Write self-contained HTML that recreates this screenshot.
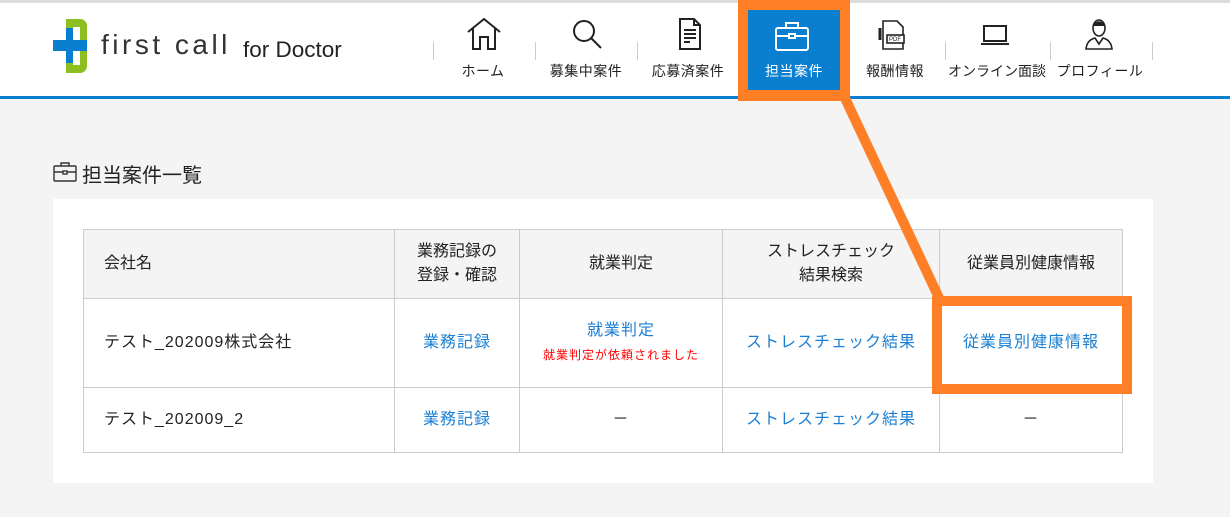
<!DOCTYPE html>
<html><head><meta charset="utf-8"><style>
*{margin:0;padding:0;box-sizing:border-box}
body{width:1230px;height:517px;overflow:hidden;background:#f4f4f4;font-family:"Liberation Sans","Noto Sans CJK JP",sans-serif;color:#222;position:relative}
.abs{position:absolute}
#top{left:0;top:0;width:1230px;height:3px;background:#ddd}
#hdr{left:0;top:3px;width:1230px;height:93px;background:#fff}
#line{left:0;top:96px;width:1230px;height:3px;background:#0a7fd0}
.sep{position:absolute;top:42px;width:1px;height:18px;background:#ccc}
.nav{position:absolute;top:61px;font-size:14px;letter-spacing:0.5px;text-align:center;width:104px;color:#222;white-space:nowrap}
.ic{position:absolute}
table{border-collapse:collapse;position:absolute;left:83px;top:229px;width:1040px;font-size:16px}
td,th{border:1px solid #ccc;text-align:center;font-weight:normal;line-height:24px}
td{letter-spacing:1px}
th{background:#f4f4f4;height:69px}
a{color:#1a7fd4;text-decoration:none}
</style></head><body>
<div class="abs" id="top"></div>
<div class="abs" id="hdr"></div>
<div class="abs" id="line"></div>
<!-- logo -->
<svg class="abs" style="left:52px;top:18px" width="36" height="56" viewBox="0 0 36 56">
<path d="M14 1 H28 a7 7 0 0 1 7 7 V48 a7 7 0 0 1 -7 7 H14 Z" fill="#8cbf1f"/>
<rect x="21" y="9" width="7" height="38" fill="#fff"/>
<rect x="14" y="10" width="7" height="35" fill="#0a7fd0"/>
<rect x="1" y="22" width="34" height="11" fill="#0a7fd0"/>
</svg>
<div class="abs" style="left:101px;top:29px;font-size:28px;letter-spacing:3.5px;color:#333">first call</div>
<div class="abs" style="left:243px;top:37px;font-size:22.5px;color:#222">for Doctor</div>
<!-- nav -->
<div class="sep" style="left:433px"></div><div class="sep" style="left:535px"></div><div class="sep" style="left:637px"></div><div class="sep" style="left:945px"></div><div class="sep" style="left:1050px"></div><div class="sep" style="left:1152px"></div>
<svg class="ic" style="left:466px;top:17px" width="36" height="34" viewBox="0 0 36 34" fill="none" stroke="#222" stroke-width="2"><path d="M2 15 L18 2 L34 15 M7 11 V32 H14 V20 H22 V32 H29 V11"/></svg>
<svg class="ic" style="left:571px;top:18px" width="32" height="32" viewBox="0 0 32 32" fill="none" stroke="#222" stroke-width="2"><circle cx="13" cy="13" r="10"/><path d="M20 20 L30 30"/></svg>
<svg class="ic" style="left:678px;top:18px" width="24" height="32" viewBox="0 0 24 32" fill="none" stroke="#222" stroke-width="2"><path d="M2 1 H16 L22 7 V31 H2 Z M16 1 V7 H22"/><path d="M6 12H18M6 16H18M6 20H18M6 24H12"/></svg>
<div class="nav" style="left:431px">ホーム</div>
<div class="nav" style="left:534px">募集中案件</div>
<div class="nav" style="left:636px">応募済案件</div>
<!-- active -->
<div class="abs" style="left:738px;top:0;width:112px;height:101px;background:#ff7f27"></div>
<div class="abs" style="left:748px;top:10px;width:92px;height:80px;background:#0a7fd0"></div>
<svg class="ic" style="left:774px;top:21px" width="36" height="30" viewBox="0 0 36 30" fill="none" stroke="#fff" stroke-width="2"><rect x="2" y="7" width="32" height="22" rx="2"/><path d="M12 7V2H24V7M2 15H34"/><rect x="15" y="13" width="6" height="4" fill="#0a7fd0"/></svg>
<div class="nav" style="left:742px;color:#fff">担当案件</div>
<svg class="ic" style="left:878px;top:20px" width="28" height="30" viewBox="0 0 28 30" fill="none" stroke="#222" stroke-width="1.6"><path d="M5 1H19L25 7V29H5Z"/><rect x="9" y="15" width="17" height="8" fill="#fff"/><text x="11" y="21" font-size="6" fill="#222" stroke="none">PDF</text><path d="M2 8V20" stroke-width="3"/></svg>
<div class="nav" style="left:843px">報酬情報</div>
<svg class="ic" style="left:980px;top:24px" width="30" height="22" viewBox="0 0 30 22" fill="none" stroke="#222" stroke-width="2"><rect x="4" y="2" width="22" height="15"/><path d="M1 20H29"/></svg>
<div class="nav" style="left:945px;width:104px;letter-spacing:0">オンライン面談</div>
<svg class="ic" style="left:1084px;top:18px" width="30" height="32" viewBox="0 0 30 32" fill="none" stroke="#222" stroke-width="1.6"><ellipse cx="15" cy="10" rx="6" ry="8"/><path d="M9 8 Q15 0 21 8" fill="#222"/><path d="M2 31 Q3 22 11 20 L15 26 L19 20 Q27 22 28 31Z"/></svg>
<div class="nav" style="left:1048px">プロフィール</div>
<!-- title -->
<svg class="abs" style="left:53px;top:162px" width="24" height="20" viewBox="0 0 24 20" fill="none" stroke="#333" stroke-width="1.4"><rect x="1" y="4" width="22" height="15" rx="1"/><path d="M8 4V1H16V4M1 10H23"/><rect x="10" y="9" width="4" height="3" fill="#fff"/></svg>
<div class="abs" style="left:82px;top:159px;font-size:20px;color:#222">担当案件一覧</div>
<div class="abs" style="left:53px;top:199px;width:1100px;height:284px;background:#fff"></div>
<table>
<tr><th style="width:311px;text-align:left;padding-left:20px">会社名</th><th style="width:125px">業務記録の<br>登録・確認</th><th style="width:203px">就業判定</th><th style="width:217px">ストレスチェック<br>結果検索</th><th>従業員別健康情報</th></tr>
<tr style="height:89px"><td style="text-align:left;padding-left:20px">テスト_202009株式会社</td><td><a>業務記録</a></td><td><a>就業判定</a><br><span style="color:#f00;font-size:12px;letter-spacing:1px">就業判定が依頼されました</span></td><td><a>ストレスチェック結果</a></td><td><a>従業員別健康情報</a></td></tr>
<tr style="height:65px"><td style="text-align:left;padding-left:20px">テスト_202009_2</td><td><a>業務記録</a></td><td>－</td><td><a>ストレスチェック結果</a></td><td>－</td></tr>
</table>
<!-- orange annotation -->
<svg class="abs" style="left:0;top:0" width="1230" height="517"><line x1="844" y1="96" x2="940" y2="300" stroke="#ff7f27" stroke-width="10"/><rect x="937" y="301" width="190" height="88" fill="none" stroke="#ff7f27" stroke-width="10"/></svg>
</body></html>
